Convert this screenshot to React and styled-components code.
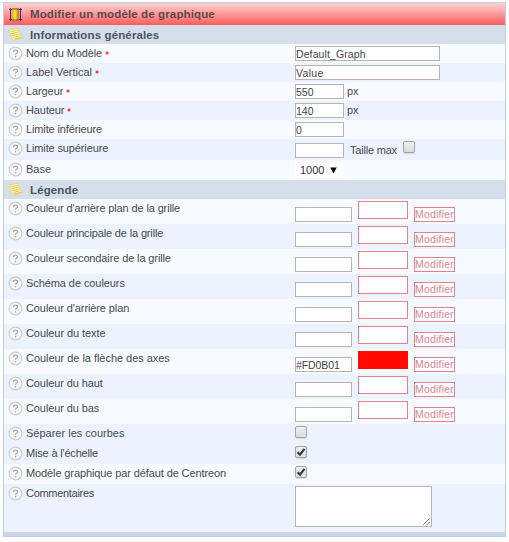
import React from 'react';
import styled, { createGlobalStyle } from 'styled-components';

const Global = createGlobalStyle`
  *, *::before, *::after { box-sizing: border-box; }
  body {
    margin: 0;
    background: #fff;
    font-family: "Liberation Sans", Arial, sans-serif;
    font-size: 11px;
    color: #4a4a4a;
  }
`;

const Panel = styled.form`
  width: 503px;
  margin: 2px 0 0 3px;
  border: 1px solid #bfcfe2;
  overflow: hidden;
`;

const Heading = styled.h1`
  display: flex;
  align-items: center;
  gap: 7px;
  height: 22px;
  margin: 0;
  padding-left: 4px;
  font-size: 11.5px;
  font-weight: bold;
  color: #5c4a4e;
  letter-spacing: 0.13px;
  white-space: nowrap;
  background: linear-gradient(#ffd3d3, #ff5c5c);
`;

const Section = styled(Heading).attrs({ as: 'h2' })`
  height: 19px;
  color: #50555c;
  background: #d5dfeb;
`;

const Row = styled.div`
  display: grid;
  grid-template-columns: 291px 1fr;
  height: ${(p) => p.$height || 19}px;
  background: ${(p) => (p.$dark ? '#ecf3ff' : '#f7fbff')};
`;

const Label = styled.label`
  display: flex;
  align-items: center;
  gap: 3px;
  height: 19px;
  padding-left: 4px;
  white-space: nowrap;
`;

const LabelText = styled.span`
  padding-bottom: 2px;
  letter-spacing: ${(p) => p.$spacing || 0}px;
`;

const RequiredMark = styled.svg`
  display: block;
  margin: 0 0 1px;
`;

const Controls = styled.div`
  display: flex;
  align-items: flex-start;
  padding-top: 2px;
`;

const Input = styled.input`
  width: ${(p) => p.$width}px;
  height: 15px;
  margin: ${(p) => p.$offset || 0}px 0 0;
  padding: 0;
  border: 1px solid #b5b5b5;
  border-radius: 0;
  background: #fff;
  font: 10.5px/13px "Liberation Sans", Arial, sans-serif;
  letter-spacing: ${(p) => p.$spacing || 0}px;
  color: #444;
  outline: 0;
`;

const Unit = styled.span`
  margin: ${(p) => p.$offset || 0}px 0 0 ${(p) => p.$gap}px;
  line-height: 15px;
  letter-spacing: ${(p) => p.$spacing || 0}px;
`;

const Swatch = styled.span`
  width: 50px;
  height: 18px;
  margin: 0 6px;
  border: 1px solid ${(p) => p.$fill || '#e0838d'};
  background: ${(p) => p.$fill || '#fff'};
`;

const Modify = styled.button`
  width: 41px;
  height: 15px;
  margin: 6px 0 0;
  padding: 0;
  border: 1px solid #e0838d;
  border-radius: 0;
  background: #fff;
  color: #dc8290;
  font: 10.5px/13px "Liberation Sans", Arial, sans-serif;
  letter-spacing: 0.2px;
  white-space: nowrap;
`;

const Check = styled.span`
  display: block;
  width: 12px;
  height: 12px;
  margin-left: ${(p) => p.$gap || 0}px;
  border: 1px solid #a3a3a3;
  border-radius: 2px;
  background: linear-gradient(#eee, #dcdcdc);
  box-shadow: 0 1px 1px rgba(0, 0, 0, 0.1);
  svg { display: block; }
`;

const Select = styled.div`
  display: flex;
  align-items: center;
  width: 49px;
  height: 16px;
  padding-left: 5px;
  gap: 6px;
  background: #fff;
  color: #333;
`;

const Comments = styled.textarea`
  display: block;
  width: 137px;
  height: 41px;
  margin: 0;
  border: 1px solid #b5b5b5;
  background: #fff;
  resize: none;
  outline: 0;
`;

const CommentsBox = styled.div`
  position: relative;
  height: 41px;
  svg { position: absolute; right: 2px; bottom: 2px; }
`;

const Footer = styled.div`
  height: 4px;
  background: #cbd3ec;
`;

const HelpIcon = () => (
  <svg width="15" height="15" viewBox="0 0 15 15">
    <circle cx="7.5" cy="7.5" r="6.4" fill="#f5f5f3" stroke="#cfcfcf" strokeWidth="1.2" />
    <path d="M5.5 6.1C5.5 3.4 9.5 3.5 9.5 5.8C9.5 7.1 7.5 7.2 7.5 8.8M7.5 10V11.2" fill="none" stroke="#a2a2a2" strokeWidth="1.1" />
  </svg>
);

const TemplateIcon = () => (
  <svg width="15" height="15" viewBox="0 0 15 15">
    <defs>
      <linearGradient id="gold" x1="0" x2="1">
        <stop offset="0" stopColor="#f0ae00" />
        <stop offset=".45" stopColor="#ffe04a" />
        <stop offset="1" stopColor="#b87800" />
      </linearGradient>
    </defs>
    <path d="M4 1.5H11V13.5H4Z" fill="url(#gold)" />
    <path d="M1 2.5H4M11 2.5H14M1 12.5H4M11 12.5H14M2.5 1V14M12.5 1V14" fill="none" stroke="#34306c" />
    <path d="M4 2H11M4 13H11" stroke="#67521c" />
  </svg>
);

const NoteIcon = () => (
  <svg width="15" height="15" viewBox="0 0 15 15">
    <path d="M1 3.2L10 1.2L11.5 6L14.5 10.5L5.5 13.5L2.8 9Z" fill="#fff5b8" stroke="#efd056" strokeWidth=".8" />
    <path d="M2.5 4.9L9.5 3.2M3 6.8L10.3 5.1M3.8 8.8L11.4 6.9M5 10.5L12.5 8.6M6 12.1L13 10.2" stroke="#d8b135" strokeWidth=".65" />
  </svg>
);

const Required = () => (
  <RequiredMark width="4" height="4" viewBox="0 0 4 4">
    <path d="M2 .2V3.8M.5 1.3L3.5 2.7M3.5 1.3L.5 2.7" stroke="#f00" strokeWidth=".7" />
  </RequiredMark>
);

const Tick = () => (
  <svg width="10" height="10" viewBox="0 0 10 10">
    <path d="M1.6 5.2L4 7.6L8.5 1.8" fill="none" stroke="#3c3c3c" strokeWidth="2.2" />
  </svg>
);

const Arrow = () => (
  <svg width="7" height="7" viewBox="0 0 7 7">
    <path d="M.3 .5H6.7L3.8 6.1H3.2Z" fill="#000" />
  </svg>
);

const Grip = () => (
  <svg width="7" height="7" viewBox="0 0 7 7">
    <path d="M.2 6.8L6.8 .2M4 6.8L6.8 4" stroke="#555" strokeWidth=".8" />
  </svg>
);

function Field({ label, spacing, required, dark, height, children }) {
  return (
    <Row $dark={dark} $height={height}>
      <Label>
        <HelpIcon />
        <LabelText $spacing={spacing}>{label}</LabelText>
        {required && <Required />}
      </Label>
      <Controls>{children}</Controls>
    </Row>
  );
}

const colours = [
  { label: "Couleur d'arrière plan de la grille", spacing: -0.13 },
  { label: 'Couleur principale de la grille', spacing: -0.15 },
  { label: 'Couleur secondaire de la grille', spacing: -0.12 },
  { label: 'Schéma de couleurs', spacing: -0.08 },
  { label: "Couleur d'arrière plan", spacing: -0.1 },
  { label: 'Couleur du texte', spacing: -0.08 },
  { label: 'Couleur de la flèche des axes', spacing: -0.04, value: '#FD0B01', fill: '#ff0b01' },
  { label: 'Couleur du haut', spacing: -0.1 },
  { label: 'Couleur du bas', spacing: -0.1 },
];

export default function App() {
  return (
    <>
      <Global />
      <Panel>
        <Heading><TemplateIcon />Modifier un modèle de graphique</Heading>
        <Section><NoteIcon />Informations générales</Section>
        <Field label="Nom du Modèle" spacing={-0.13} required><Input $width={145} $spacing={0.1} defaultValue="Default_Graph" /></Field>
        <Field label="Label Vertical" required dark><Input $width={145} $spacing={0.3} defaultValue="Value" /></Field>
        <Field label="Largeur" spacing={-0.1} required><Input $width={49} defaultValue="550" /><Unit $gap={3}>px</Unit></Field>
        <Field label="Hauteur" spacing={-0.1} required dark><Input $width={49} defaultValue="140" /><Unit $gap={3}>px</Unit></Field>
        <Field label="Limite inférieure" spacing={-0.13}><Input $width={49} defaultValue="0" /></Field>
        <Field label="Limite supérieure" spacing={-0.13} dark height={21}>
          <Input $width={49} $offset={2} />
          <Unit $gap={6} $offset={2} $spacing={-0.2}>Taille max</Unit>
          <Check $gap={6} />
        </Field>
        <Field label="Base" height={20}><Select>1000<Arrow /></Select></Field>
        <Section><NoteIcon />Légende</Section>
        {colours.map(({ label, spacing, value, fill }, i) => (
          <Field key={label} label={label} spacing={spacing} dark={i % 2 === 1} height={25}>
            <Input $width={57} $offset={6} $spacing={-0.1} defaultValue={value} />
            <Swatch $fill={fill} />
            <Modify type="button">Modifier</Modify>
          </Field>
        ))}
        <Field label="Séparer les courbes" dark height={20}><Check /></Field>
        <Field label="Mise à l'échelle" spacing={-0.18} dark height={20}><Check><Tick /></Check></Field>
        <Field label="Modèle graphique par défaut de Centreon" spacing={-0.11} height={20}><Check><Tick /></Check></Field>
        <Field label="Commentaires" spacing={-0.3} dark height={48}>
          <CommentsBox><Comments /><Grip /></CommentsBox>
        </Field>
        <Footer />
      </Panel>
    </>
  );
}
